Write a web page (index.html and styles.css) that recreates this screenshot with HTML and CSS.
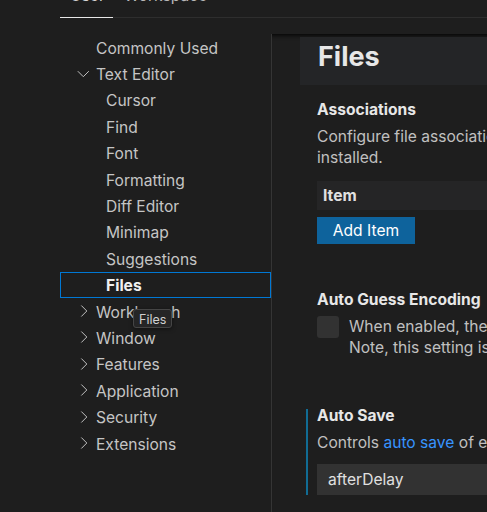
FILE: index.html
```html
<!DOCTYPE html>
<html>
<head>
<meta charset="utf-8">
<link rel="stylesheet" href="styles.css">
</head>
<body>
<div class="tabs">
  <div class="tab active"><span class="tab-label">User</span></div>
  <div class="tab"><span class="tab-label">Workspace</span></div>
</div>
<div class="main">
  <nav class="toc">
    <div class="row lvl0 plain">Commonly Used</div>
    <div class="row lvl0"><svg class="chev" viewBox="0 0 16 16"><path d="M1.8 5.2 L7.3 10.7 L12.8 5.2"/></svg><span>Text Editor</span></div>
    <div class="row lvl1">Cursor</div>
    <div class="row lvl1">Find</div>
    <div class="row lvl1">Font</div>
    <div class="row lvl1">Formatting</div>
    <div class="row lvl1">Diff Editor</div>
    <div class="row lvl1">Minimap</div>
    <div class="row lvl1">Suggestions</div>
    <div class="row lvl1 selected">Files</div>
    <div class="row lvl0"><svg class="chev" viewBox="0 0 16 16"><path d="M5.3 2.5 L10.8 8 L5.3 13.5"/></svg><span>Workbench</span></div>
    <div class="row lvl0"><svg class="chev" viewBox="0 0 16 16"><path d="M5.3 2.5 L10.8 8 L5.3 13.5"/></svg><span>Window</span></div>
    <div class="row lvl0"><svg class="chev" viewBox="0 0 16 16"><path d="M5.3 2.5 L10.8 8 L5.3 13.5"/></svg><span>Features</span></div>
    <div class="row lvl0"><svg class="chev" viewBox="0 0 16 16"><path d="M5.3 2.5 L10.8 8 L5.3 13.5"/></svg><span>Application</span></div>
    <div class="row lvl0"><svg class="chev" viewBox="0 0 16 16"><path d="M5.3 2.5 L10.8 8 L5.3 13.5"/></svg><span>Security</span></div>
    <div class="row lvl0"><svg class="chev" viewBox="0 0 16 16"><path d="M5.3 2.5 L10.8 8 L5.3 13.5"/></svg><span>Extensions</span></div>
  </nav>
  <section class="editor">
    <div class="pane">
      <div class="group-title">Files</div>
      <div class="items">
        <div class="item item-assoc">
          <div class="item-title">Associations</div>
          <div class="desc">Configure file associations to languages (for example "*.myext": "html"). These have precedence over the default associations of the languages<br>installed.</div>
          <div class="table-head">Item</div>
          <div class="button">Add Item</div>
        </div>
        <div class="item item-guess">
          <div class="item-title">Auto Guess Encoding</div>
          <div class="check-row">
            <div class="checkbox"></div>
            <div class="desc check-desc">When enabled, the editor will attempt to guess the character set encoding when opening files.<br>Note, this setting is not respected by text search.</div>
          </div>
        </div>
        <div class="item item-save focused">
          <div class="item-title short">Auto Save</div>
          <div class="desc save-desc">Controls <span class="link">auto save</span> of editors that have unsaved changes.</div>
          <div class="select">afterDelay</div>
        </div>
      </div>
    </div>
  </section>
</div>
<div class="tooltip">Files</div>
</body>
</html>
```
FILE: styles.css
```css
html, body {
  margin: 0;
  padding: 0;
}
body {
  width: 487px;
  height: 512px;
  overflow: hidden;
  background: #1e1e1e;
  font-family: Inter, "Noto Sans", sans-serif;
  font-size: 15.6px;
  color: #c5c5c5;
  position: relative;
}
.tabs {
  display: flex;
  margin-left: 60px;
  height: 17px;
  border-bottom: 1px solid #2e2e2e;
}
.tab {
  height: 17px;
  box-sizing: border-box;
  color: #b8b8b8;
}
.tab.active {
  width: 53px;
  border-bottom: 1px solid #e7e7e7;
  height: 18px;
  padding-left: 10px;
  color: #d8d8d8;
}
.tab:not(.active) {
  padding-left: 11px;
}
.tab-label {
  display: block;
  line-height: 20px;
  margin-top: -14px;
  white-space: nowrap;
}
.main {
  display: flex;
  margin-top: 16px;
  height: 478px;
}
.toc {
  flex: none;
  width: 271px;
  padding-left: 60px;
  box-sizing: border-box;
}
.row {
  height: 26.4px;
  display: flex;
  align-items: center;
  box-sizing: border-box;
  padding-top: 2px;
  white-space: nowrap;
  color: #c5c5c5;
}
.lvl0 {
  padding-left: 16px;
}
.lvl0.plain {
  padding-left: 36px;
}
.lvl1 {
  padding-left: 46px;
}
.chev {
  width: 16px;
  height: 16px;
  margin-right: 4px;
  margin-top: -2px;
  flex: none;
  fill: none;
  stroke: #c0c0c0;
  stroke-width: 1;
}
.selected {
  border: 1px solid #0078d4;
  padding-left: 45px;
  padding-top: 1px;
  font-weight: 700;
  color: #f0f0f0;
}
.editor {
  flex: 1;
  min-width: 0;
  border-left: 1px solid #353535;
  overflow: hidden;
  box-shadow: inset 0 6px 5px -5px #000;
}
.pane {
  padding-top: 3px;
  padding-left: 28px;
}
.group-title {
  height: 48px;
  box-sizing: border-box;
  padding-top: 1px;
  background: #242527;
  padding-left: 18px;
  font-size: 27px;
  font-weight: 700;
  line-height: 38px;
  color: #e7e7e7;
  white-space: nowrap;
}
.items {
  padding-left: 6px;
}
.item {
  border-left: 2px solid transparent;
  padding-left: 9px;
}
.item-title {
  font-weight: 700;
  padding-top: 1px;
  line-height: 21px;
  color: #e7e7e7;
  white-space: nowrap;
}
.item-title.short {
  line-height: 11px;
}
.desc {
  line-height: 21px;
  color: #c0c0c0;
  white-space: nowrap;
}
.item-assoc {
  margin-top: 13px;
}
.item-assoc .desc {
  margin-top: 5.5px;
}
.table-head {
  margin-top: 13.5px;
  height: 29px;
  line-height: 29px;
  background: #252526;
  padding-left: 6px;
  font-weight: 700;
  color: #e0e0e0;
}
.button {
  margin-top: 7px;
  width: 98px;
  height: 27px;
  line-height: 27px;
  text-align: center;
  background: #0e639c;
  color: #ffffff;
}
.item-guess {
  margin-top: 44px;
}
.check-row {
  display: flex;
  gap: 10px;
  margin-top: 5.5px;
}
.checkbox {
  flex: none;
  width: 22px;
  height: 22px;
  border-radius: 3px;
  background: #323232;
  margin-top: 0.5px;
}
.item-save {
  margin-top: 51.5px;
}
.item.focused {
  border-left-color: #116c94;
}
.save-desc {
  margin-top: 10.5px;
}
.link {
  color: #3794ff;
}
.select {
  margin-top: 11.5px;
  height: 31px;
  line-height: 31px;
  background: #323232;
  padding-left: 11px;
  color: #e0e0e0;
}
.tooltip {
  position: absolute;
  left: 133px;
  top: 309px;
  height: 19px;
  line-height: 19px;
  padding: 0 5px;
  font-size: 12.5px;
  color: #d0d0d0;
  background: #252526;
  border: 1px solid #454545;
  border-radius: 3px;
  box-sizing: border-box;
  box-shadow: 0 1px 4px rgba(0,0,0,0.5);
}
```
